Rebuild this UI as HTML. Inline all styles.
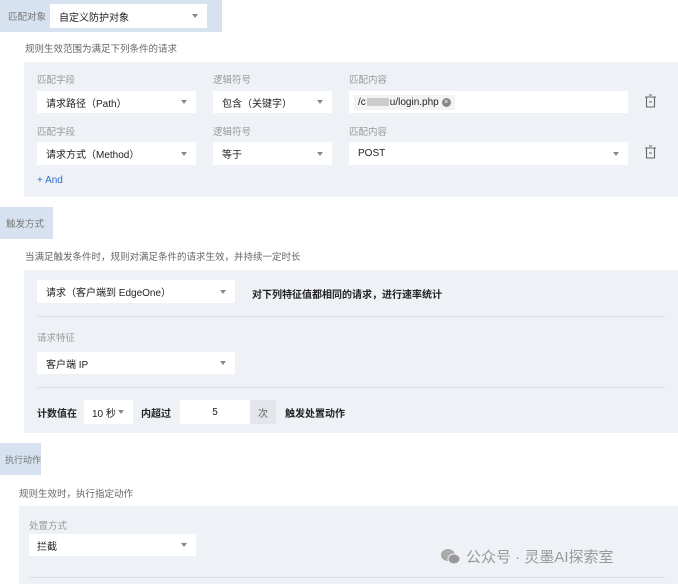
<!DOCTYPE html>
<html><head><meta charset="utf-8"><style>
*{box-sizing:border-box;margin:0;padding:0}
body{width:678px;height:584px;overflow:hidden;background:#fff;font-family:"Liberation Sans","Noto Sans CJK SC",sans-serif;font-size:10px;color:#222;position:relative}
.a{position:absolute}
.tag{background:#d6e2ef;color:#777;font-size:9.5px;display:flex;align-items:center;padding-left:6px}
.sel{position:absolute;background:#fff;font-size:10px;color:#222;display:flex;align-items:center;padding-left:9px}
.sel .ar{position:absolute;right:9px;top:50%;margin-top:-2px;width:0;height:0;border-left:3px solid transparent;border-right:3px solid transparent;border-top:4px solid #888}
.panel{position:absolute;background:#eef1f6}
.lab{position:absolute;color:#999;font-size:9.5px}
.desc{position:absolute;color:#666;font-size:9.5px}
.hr{position:absolute;height:1px;background:#d8dce3}
.b{font-weight:bold;color:#222}
</style></head><body>
<div class="a tag" style="left:0;top:0;width:222px;height:32px;padding-left:8px">匹配对象</div>
<div class="sel" style="left:50px;top:4px;width:157px;height:24px">自定义防护对象<span class="ar"></span></div>
<div class="desc" style="left:25px;top:41px">规则生效范围为满足下列条件的请求</div>
<div class="panel" style="left:24px;top:62px;width:654px;height:135px"></div>
<div class="lab" style="left:37px;top:72px">匹配字段</div>
<div class="lab" style="left:213px;top:72px">逻辑符号</div>
<div class="lab" style="left:349px;top:72px">匹配内容</div>
<div class="sel" style="left:37px;top:91px;width:159px;height:22px">请求路径（Path）<span class="ar"></span></div>
<div class="sel" style="left:213px;top:91px;width:119px;height:22px">包含（关键字）<span class="ar"></span></div>
<div class="sel" style="left:349px;top:91px;width:279px;height:22px;padding-left:5px"><span style="background:#f2f3f5;padding:2px 4px;display:flex;align-items:center">/c<span style="display:inline-block;width:22px;height:8px;background:#ccc;margin:0 1px"></span>u/login.php <span style="display:inline-block;width:9px;height:9px;border-radius:50%;background:#888;color:#fff;font-size:7px;line-height:9px;text-align:center;margin-left:3px">×</span></span></div>
<div class="lab" style="left:37px;top:124px">匹配字段</div>
<div class="lab" style="left:213px;top:124px">逻辑符号</div>
<div class="lab" style="left:349px;top:124px">匹配内容</div>
<div class="sel" style="left:37px;top:142px;width:159px;height:23px">请求方式（Method）<span class="ar"></span></div>
<div class="sel" style="left:213px;top:142px;width:119px;height:23px">等于<span class="ar"></span></div>
<div class="sel" style="left:349px;top:142px;width:279px;height:23px">POST<span class="ar"></span></div>
<svg class="a" style="left:644px;top:94px" width="13" height="14" viewBox="0 0 13 14" fill="none" stroke="#666" stroke-width="1.1"><path d="M1 3h11M5 1h3M2.5 3v10h8V3M5 8h3"/></svg>
<svg class="a" style="left:644px;top:145px" width="13" height="14" viewBox="0 0 13 14" fill="none" stroke="#666" stroke-width="1.1"><path d="M1 3h11M5 1h3M2.5 3v10h8V3M5 8h3"/></svg>
<div class="a" style="left:37px;top:175px;color:#2a6fdb;font-size:10px">+ And</div>

<div class="a tag" style="left:0;top:207px;width:53px;height:32px">触发方式</div>
<div class="desc" style="left:25px;top:249px">当满足触发条件时，规则对满足条件的请求生效，并持续一定时长</div>
<div class="panel" style="left:24px;top:270px;width:654px;height:163px"></div>
<div class="sel" style="left:37px;top:280px;width:198px;height:23px">请求（客户端到 EdgeOne）<span class="ar"></span></div>
<div class="a b" style="left:252px;top:286px">对下列特征值都相同的请求，进行速率统计</div>
<div class="hr" style="left:37px;top:316px;width:628px"></div>
<div class="lab" style="left:37px;top:330px">请求特征</div>
<div class="sel" style="left:37px;top:352px;width:198px;height:22px">客户端 IP<span class="ar"></span></div>
<div class="hr" style="left:37px;top:387px;width:628px"></div>
<div class="a b" style="left:37px;top:405px">计数值在</div>
<div class="sel" style="left:84px;top:400px;width:49px;height:24px;padding-left:8px">10 秒<span class="ar"></span></div>
<div class="a b" style="left:141px;top:405px">内超过</div>
<div class="sel" style="left:180px;top:400px;width:70px;height:24px;justify-content:center;padding-left:0">5</div>
<div class="a" style="left:250px;top:400px;width:26px;height:24px;background:#e2e5ea;color:#666;display:flex;align-items:center;justify-content:center">次</div>
<div class="a b" style="left:285px;top:405px">触发处置动作</div>

<div class="a tag" style="left:0;top:443px;width:41px;height:32px;padding-left:5px;font-size:9px">执行动作</div>
<div class="desc" style="left:19px;top:486px">规则生效时，执行指定动作</div>
<div class="panel" style="left:19px;top:506px;width:659px;height:78px"></div>
<div class="lab" style="left:29px;top:518px">处置方式</div>
<div class="sel" style="left:29px;top:534px;width:167px;height:22px;padding-left:8px">拦截<span class="ar"></span></div>
<div class="hr" style="left:29px;top:577px;width:636px"></div>
<div class="a" style="left:440px;top:546px;color:#999;font-size:15px;display:flex;align-items:center">
<svg width="22" height="18" viewBox="0 0 22 18"><ellipse cx="8" cy="7" rx="7" ry="6" fill="#aaa"/><ellipse cx="14" cy="11" rx="6" ry="5" fill="#999" stroke="#eef1f6" stroke-width="1"/></svg>
<span style="margin-left:4px">公众号 · 灵墨AI探索室</span></div>
</body></html>
